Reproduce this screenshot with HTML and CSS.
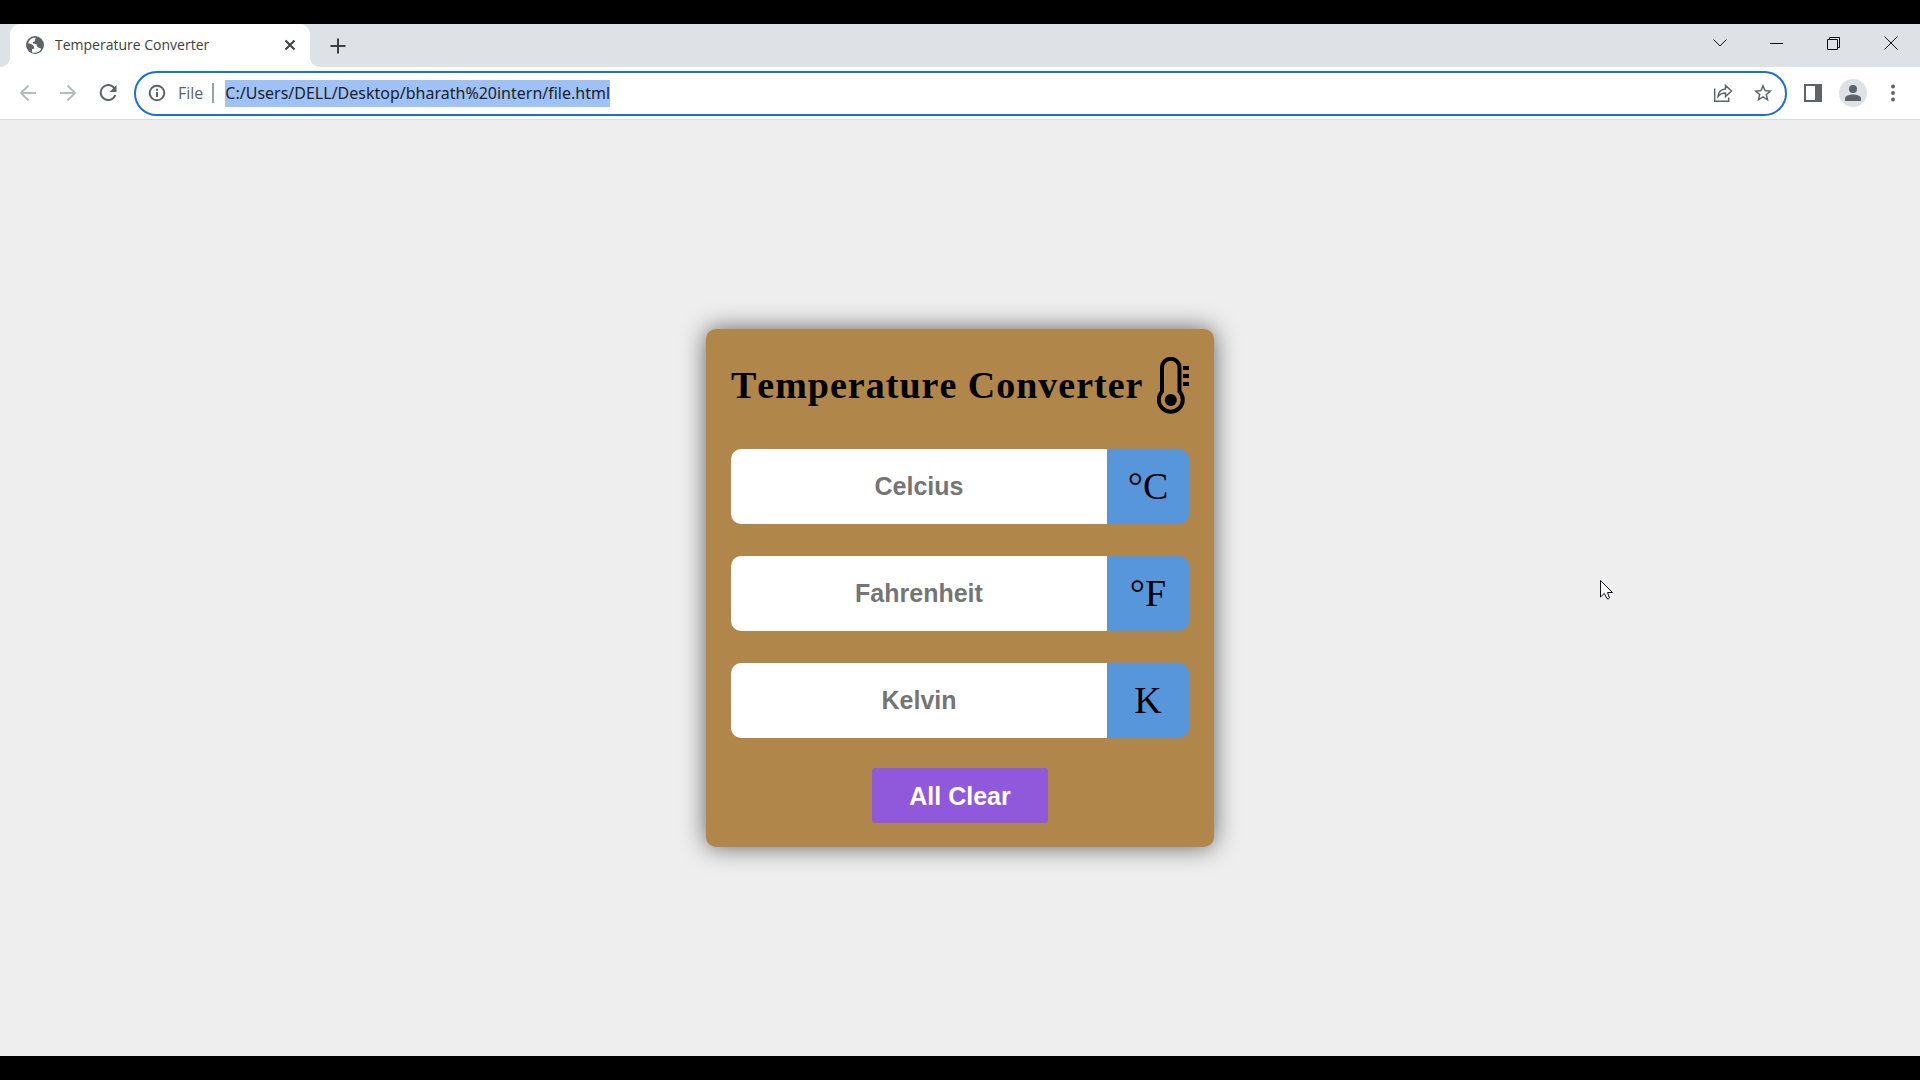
FILE: index.html
```
<!DOCTYPE html>
<html lang="en">
<head>
<meta charset="utf-8">
<title>Temperature Converter</title>
<link rel="stylesheet" href="styles.css">
</head>
<body>
<div class="window">
  <header class="tab-strip">
    <div class="tab">
      <svg class="icon-18" viewBox="0 0 24 24"><circle cx="12" cy="12" r="12" fill="#5f6368"/><path fill="#fff" d="M13 2.500C9 2 4.500 4.500 2.700 9.500L7 10.500 10 13 11 16.500 8 17.500V21.500C12 23.500 18 21.500 20.500 17L17 15.500 14.500 13.500 14 11 9.500 10 9 8 12 7Z"/><path fill="#5f6368" d="M3 11L10 13.500V15.500L6 16 7 21ZM14 3L21 7 22 15 17.500 13.500 17 10.500 13 9.500 13.500 7 11.500 5Z"/></svg>
      <span class="tab-title">Temperature Converter</span>
      <button class="plain" aria-label="Close tab"><svg class="icon-18" viewBox="0 0 18 18"><path class="line" d="M4.500 4.500l9 9m0-9l-9 9"/></svg></button>
    </div>
    <button class="plain new-tab" aria-label="New tab"><svg class="icon-18" viewBox="0 0 18 18"><path class="line" d="M9 1.500v15M1.500 9h15"/></svg></button>
    <div class="window-controls">
      <button class="plain" aria-label="Search tabs"><svg class="icon-14" viewBox="0 0 14 14"><path class="line thin" d="M.5 3.500L7 10l6.500-6.500"/></svg></button>
      <button class="plain" aria-label="Minimize"><svg class="icon-14" viewBox="0 0 14 14"><path class="line thin" d="M0 7.500h13"/></svg></button>
      <button class="plain" aria-label="Restore"><svg class="icon-14" viewBox="0 0 14 14"><path class="line thin" d="M.5 3.500h10v10h-10zM2.500 3V1.500h10v10H11"/></svg></button>
      <button class="plain" aria-label="Close"><svg class="icon-14" viewBox="0 0 14 14"><path class="line thin" d="M.5 .5l13 13m0-13l-13 13"/></svg></button>
    </div>
  </header>
  <nav class="toolbar">
    <button class="plain muted" aria-label="Back"><svg class="icon-18" viewBox="0 0 18 18"><path class="line" d="M17 9H2m7.500-7.500L2 9l7.500 7.500"/></svg></button>
    <button class="plain muted" aria-label="Forward"><svg class="icon-18" viewBox="0 0 18 18"><path class="line" d="M1 9h15M8.500 1.500L16 9l-7.500 7.500"/></svg></button>
    <button class="plain" aria-label="Reload"><svg class="icon-18" viewBox="0 0 18 18"><path class="line" d="M15.500 4.500A7.500 7.500 0 1 0 16.300 11"/><path fill="currentColor" d="M17.500 1v7h-7z"/></svg></button>
    <div class="omnibox">
      <svg class="icon-18" viewBox="0 0 18 18"><circle class="line" cx="9" cy="9" r="7.300"/><path class="line" d="M9 8v5M9 4.800v2"/></svg>
      <label class="scheme" for="address">File</label>
      <input class="address" id="address" type="text" spellcheck="false" value="C:/Users/DELL/Desktop/bharath%20intern/file.html">
      <button class="plain" aria-label="Share"><svg class="icon-20" viewBox="0 0 20 20"><path class="line fine" d="M1.700 5.500v12.800h14V14.500M5 13.500c.6-5 3-7.300 7.500-7.500V2.500L18.500 8l-6 5.500V10c-3.500 0-5.500 1-7.500 3.500z"/></svg></button>
      <button class="plain" aria-label="Bookmark"><svg class="icon-20" viewBox="1 1 22 22"><path fill="currentColor" d="M22 9.240l-7.190-.62L12 2 9.190 8.630 2 9.240l5.460 4.730L5.820 21 12 17.270 18.180 21l-1.630-7.030L22 9.240zM12 15.400l-3.760 2.270 1-4.280-3.320-2.880 4.380-.38L12 6.100l1.710 4.040 4.380.38-3.320 2.880 1 4.280L12 15.400z"/></svg></button>
    </div>
    <button class="plain" aria-label="Side panel"><svg class="icon-18" viewBox="0 0 18 18"><path fill="currentColor" fill-rule="evenodd" d="M0 0h18v18H0zM2 2v14h9V2z"/></svg></button>
    <button class="plain avatar" aria-label="Profile"><svg class="icon-18" viewBox="0 0 18 18"><circle cx="9" cy="5" r="4" fill="currentColor"/><path fill="currentColor" d="M1 17v-2.500C1 11.500 6 10.500 9 10.500s8 1 8 4V17z"/></svg></button>
    <button class="plain" aria-label="Menu"><svg class="icon-18" viewBox="0 0 18 18"><g fill="currentColor"><circle cx="9" cy="2.500" r="1.900"/><circle cx="9" cy="9" r="1.900"/><circle cx="9" cy="15.500" r="1.900"/></g></svg></button>
  </nav>
  <main class="page">
    <form class="card">
      <div class="heading">
        <h1>Temperature Converter</h1>
        <svg class="thermometer" viewBox="0 0 32 57"><path fill="none" stroke="#000" stroke-width="4" d="M5 34.500V10.500a8.500 8.500 0 0 1 17.500 0v24a12 12 0 1 1-17.500 0z"/><circle cx="13.800" cy="43" r="6"/><path d="M26 9h6v4h-6zm0 8h6v4h-6zm0 8h6v4h-6z"/></svg>
      </div>
      <div class="fields">
        <div class="field"><input id="celsius" type="text" placeholder="Celcius"><label for="celsius">°C</label></div>
        <div class="field"><input id="fahrenheit" type="text" placeholder="Fahrenheit"><label for="fahrenheit">°F</label></div>
        <div class="field"><input id="kelvin" type="text" placeholder="Kelvin"><label for="kelvin">K</label></div>
      </div>
      <button class="clear" type="reset">All Clear</button>
    </form>
    <svg class="pointer" viewBox="0 0 14 20"><path fill="#fff" stroke="#101020" d="M.5 .5v16.500l3.800-3.500L7 18.500q1.500 1 2.500-.5L7.500 12.500h5z"/></svg>
  </main>
</div>
<script src="script.js"></script>
</body>
</html>
```
FILE: styles.css
```
* {
  box-sizing: border-box;
}

body {
  margin: 0;
  background: #000;
}

.window {
  display: flex;
  flex-direction: column;
  min-height: 100vh;
  padding: 24px 0;
  font-family: "Open Sans", "Noto Sans", sans-serif;
  color: #3c4043;
}

svg {
  display: block;
  flex: none;
}

.line {
  fill: none;
  stroke: currentColor;
  stroke-width: 2;
}

.line.thin {
  stroke-width: 1;
}

.line.fine {
  stroke-width: 1.5;
}

.icon-14 {
  width: 14px;
  height: 14px;
}

.icon-18 {
  width: 18px;
  height: 18px;
}

.icon-20 {
  width: 20px;
  height: 20px;
}

.plain {
  display: flex;
  align-items: center;
  justify-content: center;
  padding: 0;
  border: 0;
  background: none;
  color: #5f6368;
}

.tab-strip {
  display: flex;
  align-items: stretch;
  height: 43px;
  padding-left: 10px;
  background: #dee1e6;
}

.tab {
  position: relative;
  display: flex;
  align-items: center;
  gap: 11px;
  width: 300px;
  padding: 0 11px 1px 16px;
  border-radius: 10px 10px 0 0;
  background: #fff;
}

.tab::before,
.tab::after {
  content: "";
  position: absolute;
  bottom: 0;
  width: 10px;
  height: 10px;
}

.tab::before {
  right: 100%;
  background: radial-gradient(circle at 0 0, #dee1e6 10px, #fff 10px);
}

.tab::after {
  left: 100%;
  background: radial-gradient(circle at 100% 0, #dee1e6 10px, #fff 10px);
}

.tab-title {
  flex: 1;
  font-size: 14px;
  line-height: 20px;
}

.tab .plain,
.new-tab {
  color: #3c4043;
}

.new-tab {
  width: 55px;
}

.window-controls {
  display: flex;
  height: 37px;
  margin-left: auto;
  padding-right: 1px;
}

.window-controls .plain {
  width: 57px;
  color: #111;
}

.toolbar {
  display: flex;
  align-items: center;
  gap: 22px;
  height: 53px;
  padding: 0 18px 0 19px;
  border-bottom: 1px solid #dadce0;
  background: #fff;
}

.toolbar .muted {
  color: #b8babd;
}

.omnibox {
  display: flex;
  flex: 1;
  align-items: center;
  height: 45px;
  margin: 0 -5px;
  padding: 0 12px;
  border: 2px solid #1a6fdf;
  border-radius: 23px;
  color: #5f6368;
}

.scheme {
  margin: 0 11px 0 12px;
  padding-right: 9px;
  border-right: 2px solid #9aa0a6;
  font-size: 16px;
  line-height: 20px;
  color: #5f6368;
}

.address {
  flex: 1;
  min-width: 0;
  height: 27px;
  padding: 0;
  border: 0;
  outline: 0;
  background: none;
  font: 16px/27px "Noto Sans", "Open Sans", sans-serif;
  color: #202124;
}

.address::selection {
  background: #9ec2f7;
  color: #202124;
}

.omnibox .plain {
  margin-left: 20px;
}

.avatar {
  width: 28px;
  height: 28px;
  margin: 0 -5px;
  border-radius: 50%;
  background: #dee1e6;
}

.page {
  position: relative;
  display: flex;
  flex: 1;
  align-items: center;
  justify-content: center;
  background: #eee;
}

.card {
  display: flex;
  flex-direction: column;
  align-items: center;
  padding: 24px 25px;
  border-radius: 10px;
  background: #b0864a;
  box-shadow: 0 0 25px rgba(0, 0, 0, .6);
}

.heading {
  display: flex;
  align-items: center;
  justify-content: space-between;
  width: 458px;
  height: 64px;
  margin-bottom: 32px;
  color: #000;
}

.heading h1 {
  margin: 0;
  font: bold 38px/44px "Liberation Serif", serif;
  font-kerning: none;
  letter-spacing: 1px;
}

.thermometer {
  width: 32px;
  height: 57px;
}

.fields {
  display: grid;
  gap: 32px;
  width: 458px;
  margin-bottom: 30px;
}

.field {
  display: flex;
  height: 75px;
  overflow: hidden;
  border-radius: 10px;
}

.field input {
  flex: 1;
  min-width: 0;
  padding: 0 0 2px;
  border: 0;
  background: #fff;
  font: bold 25px/30px "Liberation Sans", sans-serif;
  text-align: center;
}

.field input::placeholder {
  color: #757575;
}

.field label {
  display: flex;
  align-items: center;
  justify-content: center;
  width: 82px;
  padding-bottom: 1px;
  background: #5896dc;
  font: 38px/44px "Liberation Serif", serif;
  color: #000;
}

.clear {
  width: 176px;
  height: 55px;
  padding: 0;
  border: 0;
  border-radius: 3px;
  background: #9058db;
  font: bold 25px/30px "Liberation Sans", sans-serif;
  color: #fff;
}

.pointer {
  position: absolute;
  top: 460px;
  right: 306px;
  width: 14px;
  height: 20px;
}
```
FILE: script.js
```
const address = document.getElementById("address");
address.focus();
address.select();
```
